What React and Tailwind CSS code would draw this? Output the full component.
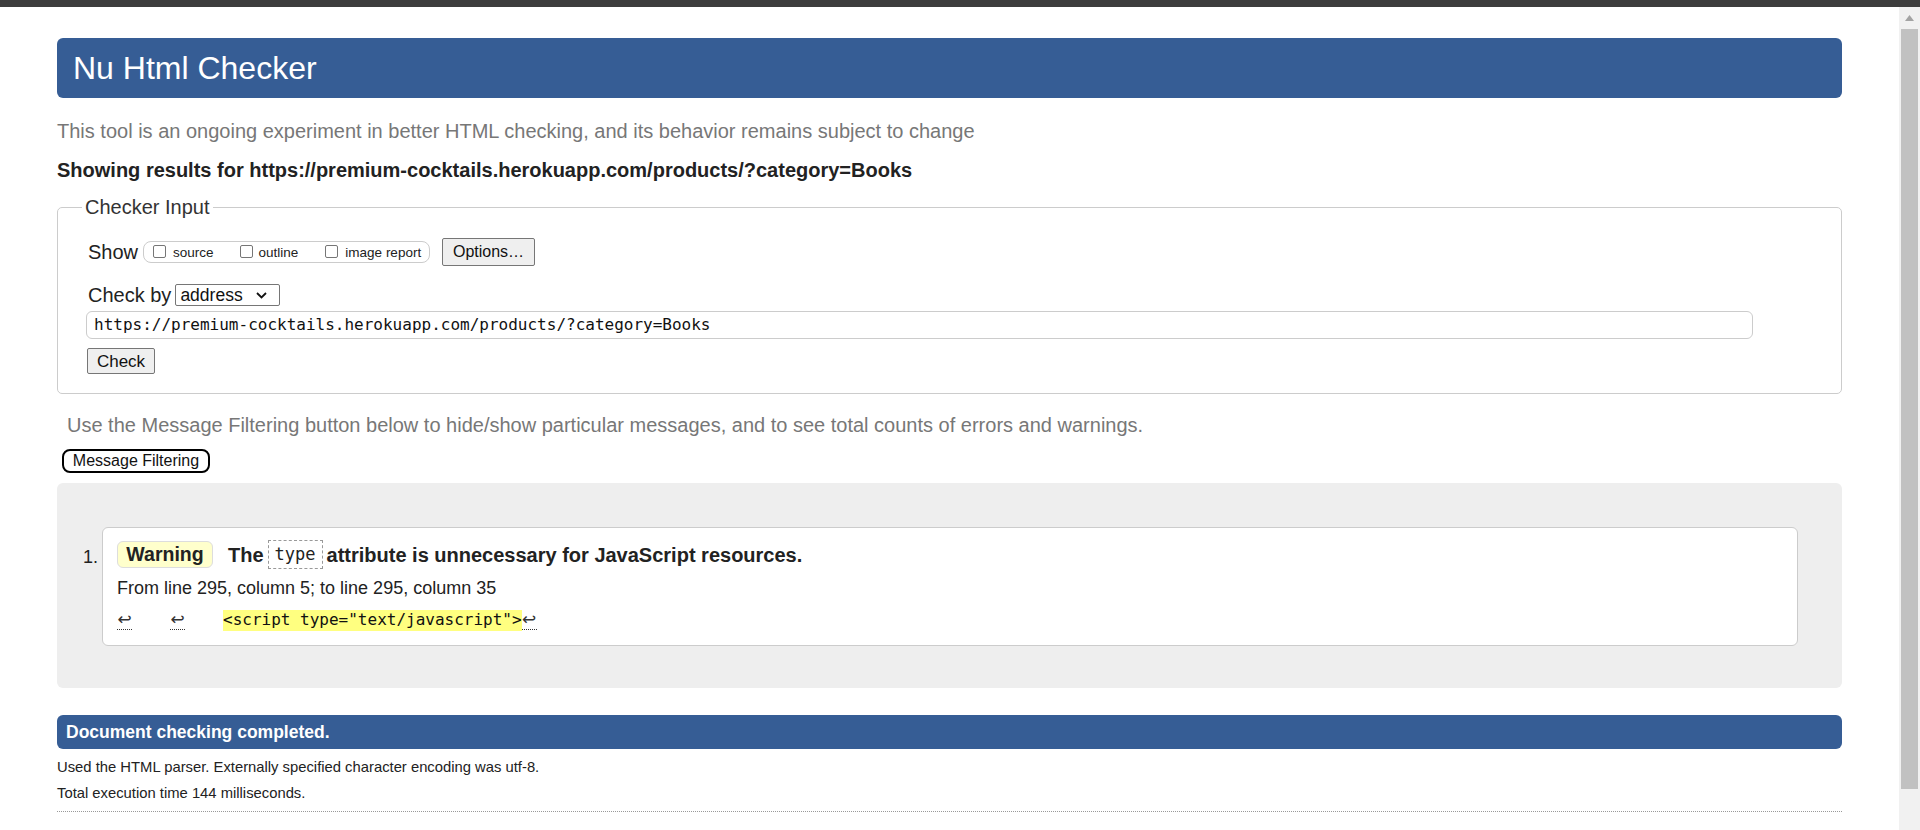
import React from "react";

const url = "https://premium-cocktails.herokuapp.com/products/?category=Books";

// Small square checkbox like the browser default
const Box = () => (
  <span className="inline-block w-[13px] h-[13px] border border-[#767676] rounded-[2px] bg-white -translate-y-[1px]" />
);

const ReturnMark = ({ className = "" }) => (
  <span
    className={`inline-block w-[15px] text-center border-b border-dotted border-[#333] leading-[19px] font-['DejaVu_Sans',sans-serif] text-[17px] text-[#333] ${className}`}
  >
    ↩
  </span>
);

const App = () => {
  return (
    <div className="w-full h-[830px] overflow-hidden bg-white flex flex-col font-['Liberation_Sans',Arial,sans-serif] text-[#222]">
      {/* browser chrome strip */}
      <div className="h-[7px] bg-[#3d3d3d] shrink-0" />

      <div className="flex flex-1 min-h-0">
        <div className="flex-1 px-[57px]">
          {/* Title bar */}
          <div className="mt-[31px] h-[60px] rounded-[6px] bg-[#365d95] flex items-center pl-[16px]">
            <h1 className="text-white text-[32px] leading-none font-normal">Nu Html Checker</h1>
          </div>

          <p className="mt-[21px] text-[20px] leading-[24px] text-[#777]">
            This tool is an ongoing experiment in better HTML checking, and its behavior remains subject to change
          </p>
          <p className="mt-[15px] text-[20px] leading-[24px] font-bold text-[#222]">
            Showing results for {url}
          </p>

          {/* Checker Input */}
          <fieldset className="mt-[11px] border border-[#ccc] rounded-[5px] pl-[24px] pr-[30px] pb-[19px]">
            <legend className="px-[3px] pt-[2px] pb-[2px] text-[20px] leading-[24px] text-[#333]">Checker Input</legend>
            <div className="pl-[6px]">
              <div className="mt-[17px] h-[28px] flex items-center">
                <span className="text-[20px] leading-[24px]">Show</span>
                <div className="ml-[5px] w-[287px] h-[22px] border border-[#ccc] rounded-[8px] flex items-center pl-[9px] text-[13.5px] text-[#222]">
                  <Box />
                  <span className="ml-[7px] pt-[2px]">source</span>
                  <span className="ml-[26px] flex items-center">
                    <Box />
                  </span>
                  <span className="ml-[6px] pt-[2px]">outline</span>
                  <span className="ml-[27px] flex items-center">
                    <Box />
                  </span>
                  <span className="ml-[7px] pt-[2px]">image report</span>
                </div>
                <button className="ml-[12px] w-[93px] h-[28px] border border-[#767676] rounded-[2px] bg-[#efefef] text-[16px] text-[#111]">
                  Options…
                </button>
              </div>

              <div className="mt-[17px] h-[24px] flex items-center">
                <span className="text-[20px] leading-[24px]">Check by</span>
                <div className="ml-[4px] w-[105px] h-[22px] border border-[#767676] rounded-[2px] flex items-center justify-between pl-[4px] pr-[12px] text-[17.5px] text-[#111]">
                  <span>address</span>
                  <svg width="11" height="7" viewBox="0 0 11 7" fill="none">
                    <path d="M1 1l4.5 4.5L10 1" stroke="#111" strokeWidth="1.8" />
                  </svg>
                </div>
              </div>

              <div className="mt-[4px] -ml-[2px] w-[1667px] h-[28px] border border-[#ccc] rounded-[6px] flex items-center pl-[7px] font-['DejaVu_Sans_Mono',monospace] text-[16px] text-[#111]">
                {url}
              </div>

              <button className="mt-[9px] -ml-[1px] block w-[68px] h-[26px] border border-[#767676] rounded-[2px] bg-[#efefef] text-[17px] text-[#111]">
                Check
              </button>
            </div>
          </fieldset>

          <p className="mt-[19px] pl-[10px] text-[20px] leading-[24px] text-[#777]">
            Use the Message Filtering button below to hide/show particular messages, and to see total counts of errors and warnings.
          </p>
          <div className="mt-[12px] pl-[5px]">
            <button className="w-[148px] h-[24px] border-2 border-black rounded-[8px] bg-white text-[16px] leading-none text-[#111]">
              Message Filtering
            </button>
          </div>

          {/* Results */}
          <div className="mt-[10px] bg-[#eee] rounded-[6px] pt-[44px] pb-[42px] pl-[26px] pr-[44px] flex">
            <div className="w-[19px] pt-[20px] text-[18px] leading-[21px]">1.</div>
            <div className="flex-1 bg-white border border-[#ccc] rounded-[6px] pt-[12px] pb-[14px] pl-[14px]">
              <div className="h-[29px] flex items-center text-[20px] font-bold">
                <span className="w-[96px] h-[27px] border border-[#ddd] rounded-[6px] bg-[#ffffcc] flex items-center justify-center text-[19.5px]">
                  Warning
                </span>
                <span className="ml-[15px]">The</span>
                <code className="ml-[4px] h-[29px] px-[6px] border border-dashed border-[#999] flex items-center font-['DejaVu_Sans_Mono',monospace] text-[17px] font-normal">
                  type
                </code>
                <span className="ml-[4px]">attribute is unnecessary for JavaScript resources.</span>
              </div>
              <p className="mt-[9px] text-[18px] leading-[21px]">From line 295, column 5; to line 295, column 35</p>
              <div className="mt-[10px] h-[22px] flex items-center">
                <ReturnMark />
                <ReturnMark className="ml-[38px]" />
                <span className="ml-[38px] bg-[#ffff80] h-[21px] flex items-center font-['DejaVu_Sans_Mono',monospace] text-[16px] text-[#111]">
                  {'<script type="text/javascript">'}
                </span>
                <ReturnMark />
              </div>
            </div>
          </div>

          <div className="mt-[27px] h-[34px] rounded-[6px] bg-[#365d95] flex items-center pl-[9px] text-white font-bold text-[17.5px]">
            Document checking completed.
          </div>
          <p className="mt-[8px] text-[14.8px] leading-[20px]">
            Used the HTML parser. Externally specified character encoding was utf-8.
          </p>
          <p className="mt-[6px] text-[14.8px] leading-[20px]">Total execution time 144 milliseconds.</p>
          <div className="mt-[8px] border-t border-dotted border-[#999]" />
        </div>

        {/* scrollbar */}
        <div className="w-[21px] shrink-0 bg-[#f1f1f1] flex flex-col items-center">
          <div className="h-[22px] flex items-center">
            <svg width="9" height="6" viewBox="0 0 9 6">
              <path d="M4.5 0L9 6H0z" fill="#a3a3a3" />
            </svg>
          </div>
          <div className="w-[17px] h-[760px] bg-[#c1c1c1]" />
        </div>
      </div>
    </div>
  );
};

export default App;
